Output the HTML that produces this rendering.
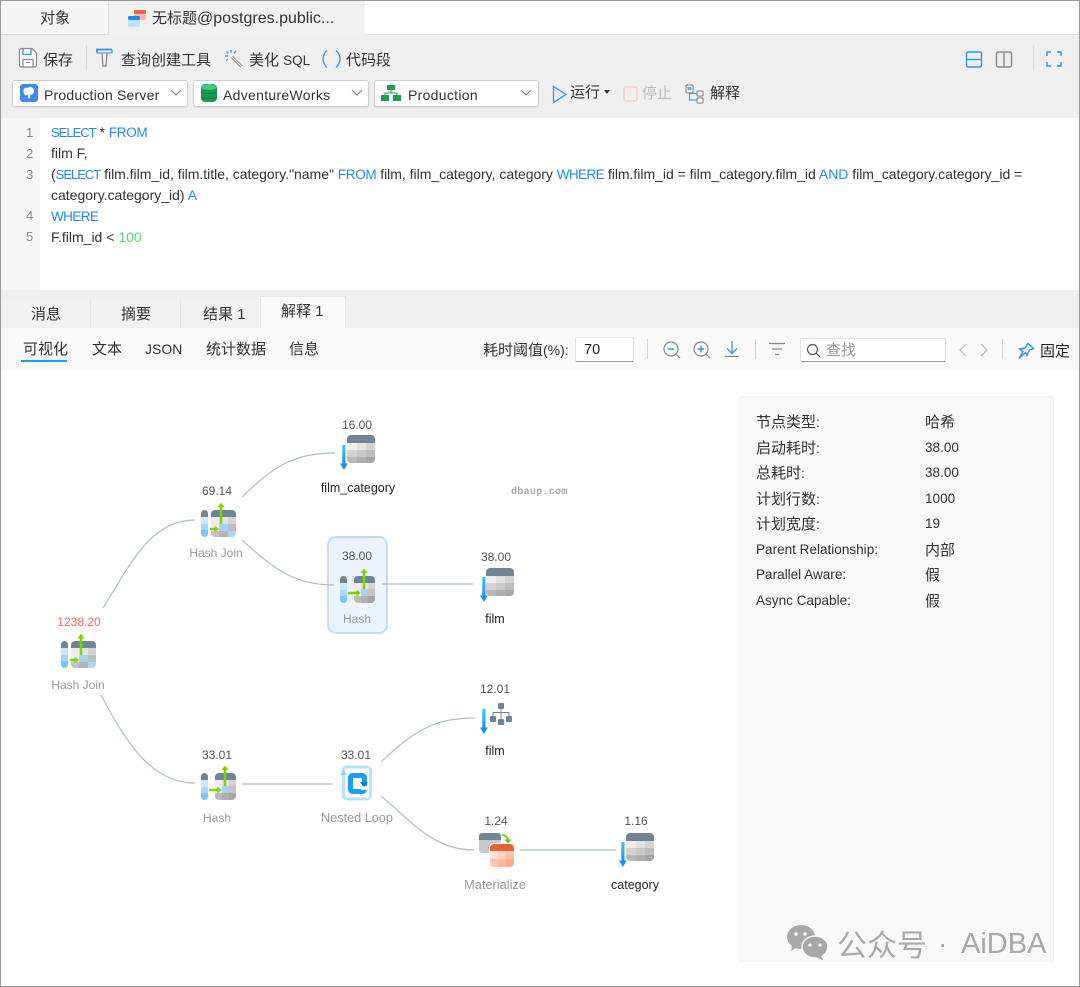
<!DOCTYPE html>
<html><head><meta charset="utf-8">
<style>
html,body{margin:0;padding:0;background:#fff}
#r{position:relative;width:1080px;height:987px;overflow:hidden;background:#fff;font-family:"Liberation Sans","Noto Sans CJK SC",sans-serif;font-size:14px;color:#333}
#r div,#r span.t{position:absolute;white-space:nowrap}
.t{line-height:20px;height:20px;font-size:15px}
.c{transform:translateX(-50%)}
.b{color:#2088f8}
.s{font-size:13px;letter-spacing:-1px}
.f{font-size:13.5px;letter-spacing:-.3px}
.w{font-size:13.5px;letter-spacing:-.6px}
i.a{font-style:normal;font-size:14px}
.g{color:#8a8a8a}
.v{font-size:13.55px}
#r span.q{font-size:14px}
.sel{background:#fff;border:1px solid #cfcfcf;border-radius:3px;height:27px;box-sizing:border-box;box-shadow:0 1px 1px rgba(0,0,0,.08)}
svg{position:absolute;overflow:visible}
#r span.n{font-size:12px;color:#555}
#r span.l{font-size:12px;color:#999}
#r span.k{font-size:12.5px;color:#222}
</style></head><body>
<div id="r">
<svg width="0" height="0" style="left:0;top:0">
<defs>
<clipPath id="cg"><rect x="0" y="0" width="28" height="28" rx="4"/></clipPath>
<clipPath id="cj"><rect x="11" y="8" width="25" height="27" rx="4"/></clipPath>
<clipPath id="cp"><rect x="1" y="8" width="7" height="27" rx="3.5"/></clipPath>
<clipPath id="ch"><rect x="15" y="8" width="21" height="27" rx="4"/></clipPath>
<clipPath id="cm"><rect x="11" y="12" width="24" height="23" rx="4"/></clipPath>
<symbol id="tbl" viewBox="0 0 28 28" width="28" height="28" overflow="visible">
<g clip-path="url(#cg)"><rect width="28" height="8" fill="#6f8494"/>
<rect y="8" width="10" height="7" fill="#efefef"/><rect x="10" y="8" width="9" height="7" fill="#e2e2e2"/><rect x="19" y="8" width="9" height="7" fill="#d3d3d3"/>
<rect y="15" width="10" height="7" fill="#d3d3d3"/><rect x="10" y="15" width="9" height="7" fill="#c8c8c8"/><rect x="19" y="15" width="9" height="7" fill="#bdbdbd"/>
<rect y="22" width="10" height="6" fill="#b8b8b8"/><rect x="10" y="22" width="9" height="6" fill="#afafaf"/><rect x="19" y="22" width="9" height="6" fill="#a6a6a6"/></g>
</symbol>
<symbol id="dn" viewBox="0 0 8 26" width="8" height="26" overflow="visible">
<defs><linearGradient id="dg" x1="0" y1="0" x2="0" y2="1"><stop offset="0" stop-color="#3fc4fb"/><stop offset="1" stop-color="#1a8ef0"/></linearGradient></defs>
<rect x="2.3" y="0" width="3.2" height="20" fill="url(#dg)"/><path d="M0 18.5H7.8L3.9 25Z" fill="#1a8ef0"/>
</symbol>
<symbol id="hj" viewBox="0 0 38 36" width="38" height="36" overflow="visible">
<g clip-path="url(#cp)"><rect x="1" y="8" width="7" height="7" fill="#6f8494"/><rect x="1" y="15" width="7" height="7" fill="#cde6fb"/><rect x="1" y="22" width="7" height="6" fill="#a9d7fa"/><rect x="1" y="28" width="7" height="7" fill="#7fc3f8"/></g>
<g clip-path="url(#cj)"><rect x="11" y="8" width="25" height="7" fill="#6f8494"/>
<rect x="11" y="15" width="8" height="7" fill="#ececec"/><rect x="19" y="15" width="9" height="7" fill="#e4e4e4"/><rect x="28" y="15" width="8" height="7" fill="#cfd6db"/>
<rect x="11" y="22" width="8" height="7" fill="#eaf2f8"/><rect x="19" y="22" width="9" height="7" fill="#a5d3f8"/><rect x="28" y="22" width="8" height="7" fill="#bcbcbc"/>
<rect x="11" y="29" width="8" height="6" fill="#c3c3c3"/><rect x="19" y="29" width="9" height="6" fill="#b4b4b4"/><rect x="28" y="29" width="8" height="6" fill="#a9d7fa"/></g>
<path d="M21 22V3" stroke="#7fd400" stroke-width="2.6" fill="none"/><path d="M17.3 5.4L21 .8l3.7 4.6Z" fill="#7fd400"/>
<path d="M10 27h5.5" stroke="#7fd400" stroke-width="2.6" fill="none"/><path d="M14.6 23.6l4.4 3.4-4.4 3.4Z" fill="#7fd400"/>
</symbol>
<symbol id="hs" viewBox="0 0 38 36" width="38" height="36" overflow="visible">
<g clip-path="url(#cp)"><rect x="1" y="8" width="7" height="7" fill="#6f8494"/><rect x="1" y="15" width="7" height="7" fill="#cde6fb"/><rect x="1" y="22" width="7" height="6" fill="#a9d7fa"/><rect x="1" y="28" width="7" height="7" fill="#7fc3f8"/></g>
<g clip-path="url(#ch)"><rect x="15" y="8" width="21" height="7" fill="#6f8494"/>
<rect x="15" y="15" width="7" height="6" fill="#ececec"/><rect x="22" y="15" width="7" height="6" fill="#e2e2e2"/><rect x="29" y="15" width="7" height="6" fill="#d3d3d3"/>
<rect x="15" y="21" width="7" height="7" fill="#e8eef3"/><rect x="22" y="21" width="7" height="7" fill="#a5d3f8"/><rect x="29" y="21" width="7" height="7" fill="#c4c4c4"/>
<rect x="15" y="28" width="7" height="7" fill="#bcbcbc"/><rect x="22" y="28" width="7" height="7" fill="#b0b0b0"/><rect x="29" y="28" width="7" height="7" fill="#a6a6a6"/></g>
<path d="M25 21V3" stroke="#7fd400" stroke-width="2.6" fill="none"/><path d="M21.3 4.8L25 .6l3.7 4.2Z" fill="#7fd400"/>
<path d="M9 25h9" stroke="#7fd400" stroke-width="2.6" fill="none"/><path d="M17.4 21.6l4.4 3.4-4.4 3.4Z" fill="#7fd400"/>
</symbol>
</defs>
</svg>

<!-- top tabs -->
<div style="left:1px;top:1px;width:107px;height:33px;background:#f5f5f5;border-right:1px solid #ddd;border-bottom:1px solid #ddd"></div>
<div style="left:109px;top:1px;width:256px;height:34px;background:#f1f1f1"></div>
<div style="left:365px;top:34px;width:715px;height:1px;background:#e0e0e0"></div>
<span class="t" style="left:40px;top:9px;color:#333">对象</span>
<svg style="left:127px;top:8px" width="22" height="22"><rect x="7" y="2" width="12" height="10" rx="2" fill="#f6b8a4"/><rect x="7" y="2" width="12" height="4" rx="1.5" fill="#e86a45"/><rect x="1" y="8" width="12" height="11" rx="2" fill="#bde0fb"/><rect x="1" y="8" width="12" height="4" rx="1.5" fill="#1e88e5"/></svg>
<span class="t" style="left:152px;top:9px;color:#333">无标题<i class="a" style="font-size:16px">@postgres.public...</i></span>

<!-- toolbar -->
<div style="left:1px;top:35px;width:1078px;height:83px;background:#efefef"></div>
<svg style="left:18px;top:47px" width="20" height="22" fill="none"><path d="M1.5 3.5a2 2 0 0 1 2-2H14l4.500 4.500v12a2 2 0 0 1-2 2H3.500a2 2 0 0 1-2-2Z" stroke="#8a8a8a" stroke-width="1.2" fill="#fff"/><path d="M5 2v5.500h8V2" stroke="#2f95ee" stroke-width="1.3"/><path d="M5 19.500v-7h10v7" stroke="#8a8a8a" stroke-width="1.2"/><path d="M8 15.500h4" stroke="#8a8a8a"/></svg>
<span class="t" style="left:43px;top:51px">保存</span>
<div style="left:86px;top:45px;width:1px;height:26px;background:#d8d8d8"></div>
<svg style="left:96px;top:48px" width="18" height="20" fill="none"><path d="M1 5V1.500h15" stroke="#2f95ee" stroke-width="1.800"/><path d="M16 1.500V5H1" stroke="#2f95ee" stroke-width="1"/><path d="M6 5l1 13h3l1-13" stroke="#888" stroke-width="1.200"/></svg>
<span class="t" style="left:121px;top:51px">查询创建工具</span>
<svg style="left:224px;top:49px" width="20" height="20" fill="none"><path d="M8 8l9.500 9.500" stroke="#8a8a8a" stroke-width="3"/><path d="M8 8l9.500 9.500" stroke="#fff" stroke-width="1"/><path d="M7 1v3M1 7h3M2.500 2.500l2 2M12 2l-2 2.500M2 12l2-2" stroke="#2f95ee" stroke-width="1.200"/></svg>
<span class="t" style="left:249px;top:51px">美化 <i class="a" style="font-size:13.500px">SQL</i></span>
<svg style="left:322px;top:49px" width="19" height="20" fill="none" stroke="#2f95ee" stroke-width="1.300"><path d="M5 1.500C-.2 6 -.2 14 5 18.500"/><path d="M14 1.500C19.200 6 19.200 14 14 18.500"/></svg>
<span class="t" style="left:346px;top:51px">代码段</span>

<svg style="left:965px;top:50px" width="18" height="18" fill="none" stroke="#2f95ee" stroke-width="1.400"><rect x="1.500" y="2" width="15" height="15" rx="1.500"/><path d="M1.500 9.500h15"/></svg>
<svg style="left:995px;top:50px" width="18" height="18" fill="none" stroke="#8a8a8a" stroke-width="1.400"><rect x="1.500" y="2" width="15" height="15" rx="1.500"/><path d="M9 2v15"/></svg>
<div style="left:1033px;top:45px;width:1px;height:26px;background:#dcdcdc"></div>
<svg style="left:1045px;top:50px" width="18" height="18" fill="none" stroke="#2f95ee" stroke-width="1.400"><path d="M2 6V2h4M12 2h4v4M16 12v4h-4M6 16H2v-4"/></svg>

<div class="sel" style="left:12px;top:80px;width:176px"></div>
<svg style="left:20px;top:84px" width="18" height="18"><rect width="18" height="18" rx="3" fill="#3d8bf0"/><path d="M5 4c-2 1-2 5 0 7 1 1 2 0 2-1l1 1v3c1 1 2 0 2-1v-2c2 0 4-1 4-4s-2-4-4-4c-1 0-2 .5-2.500 1C7 3.500 6 3.500 5 4Z" fill="#fff"/></svg>
<span class="t q" style="left:44px;top:85px;color:#333;letter-spacing:.2px">Production Server</span>
<svg style="left:170px;top:89px" width="12" height="8" fill="none" stroke="#777" stroke-width="1.100"><path d="M1 1l5 5 5-5"/></svg>

<div class="sel" style="left:193px;top:80px;width:176px"></div>
<svg style="left:200px;top:83px" width="18" height="20"><rect x="1" y="1" width="16" height="18" rx="4" fill="#1c9a52"/><ellipse cx="9" cy="4" rx="8" ry="3" fill="#3ecb7b"/><path d="M1 9c2 2 14 2 16 0M1 14c2 2 14 2 16 0" stroke="#0f7a3e" fill="none"/></svg>
<span class="t q" style="left:223px;top:85px;color:#333;letter-spacing:.3px">AdventureWorks</span>
<svg style="left:351px;top:89px" width="12" height="8" fill="none" stroke="#777" stroke-width="1.100"><path d="M1 1l5 5 5-5"/></svg>

<div class="sel" style="left:374px;top:80px;width:165px"></div>
<svg style="left:381px;top:84px" width="20" height="18"><rect x="6" y="1" width="8" height="5" fill="#1f9d55"/><rect x="0" y="11" width="8" height="6" fill="#1f9d55"/><rect x="12" y="11" width="8" height="6" fill="#1f9d55"/><path d="M10 6v3M4 11V9h12v2" stroke="#1f9d55" fill="none"/></svg>
<span class="t q" style="left:408px;top:85px;color:#333;letter-spacing:.3px">Production</span>
<svg style="left:520px;top:89px" width="12" height="8" fill="none" stroke="#777" stroke-width="1.100"><path d="M1 1l5 5 5-5"/></svg>

<svg style="left:552px;top:85px" width="16" height="19" fill="none" stroke="#2f95ee" stroke-width="1.300"><path d="M1.500 1.500L14 9.500 1.500 17.500Z"/></svg>
<span class="t" style="left:570px;top:83px">运行</span>
<svg style="left:604px;top:90px" width="7" height="5"><path d="M0 0h6L3 4Z" fill="#333"/></svg>
<svg style="left:623px;top:86px" width="16" height="16" fill="none"><rect x="1" y="1" width="13" height="14" rx="2" stroke="#fbc4bc" stroke-width="1.300"/></svg>
<span class="t" style="left:642px;top:84px;color:#bbb">停止</span>
<svg style="left:685px;top:84px" width="20" height="20" fill="none"><rect x="1" y="1" width="7" height="8" rx="1" stroke="#777" fill="#fff"/><rect x="2.500" y="3" width="4" height="3" fill="#5aa9ef"/><rect x="12" y="7" width="6" height="5" rx="1" stroke="#777" fill="#fff"/><rect x="12" y="14" width="6" height="5" rx="1" stroke="#777" fill="#fff"/><path d="M4.500 9v7H12M4.500 9.500H12" stroke="#2f95ee"/></svg>
<span class="t" style="left:710px;top:84px">解释</span>

<!-- editor -->
<div style="left:1px;top:118px;width:39px;height:172px;background:#f7f7f7"></div>
<span class="t g" style="left:26px;top:123px;font-size:13px">1</span>
<span class="t g" style="left:26px;top:144px;font-size:13px">2</span>
<span class="t g" style="left:26px;top:165px;font-size:13px">3</span>
<span class="t g" style="left:26px;top:206px;font-size:13px">4</span>
<span class="t g" style="left:26px;top:227px;font-size:13px">5</span>
<span class="t q" style="left:51px;top:122px"><span class="b s">SELECT</span> * <span class="b f">FROM</span></span>
<span class="t q" style="left:51px;top:143px">film F,</span>
<span class="t q" style="left:51px;top:164px;letter-spacing:-.02px">(<span class="b s">SELECT</span> film.film_id, film.title, category."name" <span class="b f">FROM</span> film, film_category, category <span class="b w">WHERE</span> film.film_id = film_category.film_id <span class="b">AND</span> film_category.category_id =</span>
<span class="t q" style="left:51px;top:185px">category.category_id) <span class="b">A</span></span>
<span class="t q" style="left:51px;top:206px"><span class="b w">WHERE</span></span>
<span class="t q" style="left:51px;top:227px">F.film_id &lt; <span style="color:#5ad877">100</span></span>

<!-- result tabs -->
<div style="left:1px;top:290px;width:1078px;height:38px;background:#efefef"></div>
<div style="left:1px;top:300px;width:89px;height:28px;background:#f1f1f1;border-right:1px solid #e4e4e4"></div>
<div style="left:91px;top:300px;width:89px;height:28px;background:#f1f1f1;border-right:1px solid #e4e4e4"></div>
<div style="left:181px;top:300px;width:79px;height:28px;background:#f1f1f1"></div>
<div style="left:260px;top:296px;width:86px;height:32px;background:#f9f9f9;border:1px solid #e6e6e6;border-bottom:0;box-sizing:border-box"></div>
<span class="t" style="left:31px;top:305px">消息</span>
<span class="t" style="left:121px;top:305px">摘要</span>
<span class="t" style="left:203px;top:305px">结果 1</span>
<span class="t" style="left:281px;top:302px">解释 1</span>

<div style="left:1px;top:328px;width:1078px;height:42px;background:#f9f9f9"></div>
<span class="t" style="left:23px;top:340px">可视化</span>
<div style="left:21px;top:360px;width:46px;height:2px;background:#0ea5e9"></div>
<span class="t" style="left:92px;top:340px">文本</span>
<span class="t q" style="left:145px;top:339px">JSON</span>
<span class="t" style="left:206px;top:340px">统计数据</span>
<span class="t" style="left:289px;top:340px">信息</span>

<span class="t" style="left:483px;top:340px">耗时阈值<i class="a">(%):</i></span>
<div style="left:575px;top:337px;width:59px;height:25px;background:#fff;border:1px solid #e2e2e2;border-bottom:1px solid #999;box-sizing:border-box;border-radius:2px"></div>
<span class="t" style="left:584px;top:340px;color:#222;font-size:14.500px">70</span>
<div style="left:647px;top:339px;width:1px;height:20px;background:#d5d5d5"></div>
<svg style="left:662px;top:340px" width="20" height="20" fill="none"><circle cx="9" cy="9" r="7" stroke="#888" stroke-width="1.200"/><path d="M14 14l4 4" stroke="#888" stroke-width="1.200"/><path d="M5.500 9h7" stroke="#2f95ee" stroke-width="1.400"/></svg>
<svg style="left:692px;top:340px" width="20" height="20" fill="none"><circle cx="9" cy="9" r="7" stroke="#888" stroke-width="1.200"/><path d="M14 14l4 4" stroke="#888" stroke-width="1.200"/><path d="M5.500 9h7M9 5.500v7" stroke="#2f95ee" stroke-width="1.400"/></svg>
<svg style="left:723px;top:340px" width="18" height="18" fill="none"><path d="M9 1v12M4 8.500l5 5 5-5" stroke="#2f95ee" stroke-width="1.300"/><path d="M1.500 16.500h14" stroke="#888" stroke-width="1.200"/></svg>
<div style="left:755px;top:339px;width:1px;height:20px;background:#d5d5d5"></div>
<svg style="left:768px;top:342px" width="18" height="14" fill="none" stroke="#888" stroke-width="1.200"><path d="M1 1.500h16M4 7h10M7 12.500h4"/></svg>
<div style="left:800px;top:338px;width:146px;height:24px;background:#fff;border:1px solid #e2e2e2;border-bottom:1px solid #999;box-sizing:border-box;border-radius:2px"></div>
<svg style="left:806px;top:343px" width="15" height="15" fill="none" stroke="#555" stroke-width="1.200"><circle cx="6.500" cy="6.500" r="5"/><path d="M10 10l4 4"/></svg>
<span class="t" style="left:826px;top:341px;color:#999">查找</span>
<svg style="left:958px;top:343px" width="10" height="14" fill="none" stroke="#bbb" stroke-width="1.200"><path d="M8 1L2 7l6 6"/></svg>
<svg style="left:979px;top:343px" width="10" height="14" fill="none" stroke="#bbb" stroke-width="1.200"><path d="M2 1l6 6-6 6"/></svg>
<div style="left:1002px;top:339px;width:1px;height:20px;background:#d5d5d5"></div>
<svg style="left:1017px;top:342px" width="18" height="18" fill="none" stroke="#2f95ee" stroke-width="1.400"><path d="M11 1.500l5.500 5-4 1.500-2.500 5.500-1.500-3-6.500 6 4-7L2.500 7 8 6Z"/></svg>
<span class="t" style="left:1040px;top:342px;color:#222">固定</span>

<!-- selected node -->
<div style="left:327px;top:536px;width:61px;height:98px;box-sizing:border-box;background:#ebf3fe;border:2px solid #c0dcfb;border-radius:9px"></div>

<!-- graph lines -->
<svg style="left:0;top:0" width="1080" height="987" fill="none" stroke="#a9bdca" stroke-width="1.200">
<path d="M103 608C130 565 150 520 195 520"/>
<path d="M101 695C125 740 150 783 195 783"/>
<path d="M242 497C275 465 295 453 335 453"/>
<path d="M242 540C275 570 295 585 334 585"/>
<path d="M382 584H473"/>
<path d="M242 784H333"/>
<path d="M381 762C415 730 435 718 475 718"/>
<path d="M381 796C415 825 435 850 474 850"/>
<path d="M520 850H616"/>
</svg>

<!-- nodes -->
<span class="t n c" style="left:357px;top:415px">16.00</span>
<svg style="left:347px;top:435px" width="28" height="28"><use href="#tbl"/></svg>
<svg style="left:340px;top:445px" width="8" height="26"><use href="#dn"/></svg>
<span class="t k c" style="left:358px;top:478px">film_category</span>

<span class="t n c" style="left:217px;top:481px">69.14</span>
<svg style="left:200px;top:502px" width="38" height="36"><use href="#hj"/></svg>
<span class="t l c" style="left:216px;top:543px">Hash Join</span>

<span class="t n c" style="left:357px;top:546px">38.00</span>
<svg style="left:339px;top:568px" width="38" height="36"><use href="#hs"/></svg>
<span class="t l c" style="left:357px;top:609px">Hash</span>

<span class="t n c" style="left:496px;top:547px">38.00</span>
<svg style="left:486px;top:568px" width="28" height="28"><use href="#tbl"/></svg>
<svg style="left:480px;top:577px" width="8" height="26"><use href="#dn"/></svg>
<span class="t k c" style="left:495px;top:609px">film</span>

<span class="t n c" style="left:79px;top:612px;color:#f8665a">1238.20</span>
<svg style="left:60px;top:633px" width="38" height="36"><use href="#hj"/></svg>
<span class="t l c" style="left:78px;top:675px">Hash Join</span>

<span class="t n c" style="left:495px;top:679px">12.01</span>
<svg style="left:480px;top:709px" width="8" height="26"><use href="#dn"/></svg>
<svg style="left:490px;top:703px" width="24" height="24" fill="#6f8494"><rect x="8" y="0" width="6" height="6" rx="1"/><rect x="0" y="13" width="6" height="6" rx="1"/><rect x="8" y="16" width="6" height="6" rx="1"/><rect x="16" y="13" width="6" height="6" rx="1"/><path d="M11 5v11M3 13V9.500h16V13" stroke="#6f8494" fill="none"/></svg>
<span class="t k c" style="left:495px;top:741px">film</span>

<span class="t n c" style="left:217px;top:745px">33.01</span>
<svg style="left:200px;top:765px" width="38" height="36"><use href="#hs"/></svg>
<span class="t l c" style="left:217px;top:808px">Hash</span>

<span class="t n c" style="left:356px;top:745px">33.01</span>
<svg style="left:340px;top:765px" width="34" height="37" fill="none">
<path d="M3.500 12V5a3 3 0 0 1 3-3h21a3 3 0 0 1 3 3v26a3 3 0 0 1-3 3h-21a3 3 0 0 1-3-3V12" stroke="#b7e3fb" stroke-width="3"/>
<path d="M0 10l3.500-5L7 10Z" fill="#8ed0f8"/>
<rect x="10.500" y="10.500" width="14" height="16" rx="2" stroke="#1e9df0" stroke-width="5" fill="#fff"/>
<rect x="21" y="21" width="7" height="4" fill="#fff"/><path d="M20 17h8l-4 5Z" fill="#1479d8"/>
</svg>
<span class="t l c" style="left:357px;top:808px;font-size:12.700px">Nested Loop</span>

<span class="t n c" style="left:496px;top:811px">1.24</span>
<svg style="left:479px;top:832px" width="36" height="38">
<rect x="0" y="1" width="22" height="20" rx="3" fill="#c9c9c9"/><rect y="1" width="22" height="7" rx="3" fill="#6f8494"/><rect y="5" width="22" height="3" fill="#6f8494"/>
<rect x="10" y="11" width="26" height="25" rx="5" fill="#fff"/>
<g clip-path="url(#cm)"><rect x="11" y="12" width="24" height="7" fill="#e9603d"/>
<rect x="11" y="19" width="8" height="8" fill="#fde3d8"/><rect x="19" y="19" width="8" height="8" fill="#fcd2c1"/><rect x="27" y="19" width="8" height="8" fill="#fdc0aa"/>
<rect x="11" y="27" width="8" height="8" fill="#fdc8b3"/><rect x="19" y="27" width="8" height="8" fill="#fcb9a0"/><rect x="27" y="27" width="8" height="8" fill="#fca98c"/></g>
<path d="M23 3c3 0 5 1 6 5" stroke="#68c800" stroke-width="1.800" fill="none"/><path d="M25.500 7.500h7l-3.500 4Z" fill="#68c800"/>
</svg>
<span class="t l c" style="left:495px;top:875px;font-size:12.800px">Materialize</span>

<span class="t n c" style="left:636px;top:811px">1.16</span>
<svg style="left:626px;top:833px" width="28" height="28"><use href="#tbl"/></svg>
<svg style="left:619px;top:842px" width="8" height="26"><use href="#dn"/></svg>
<span class="t k c" style="left:635px;top:875px">category</span>

<span class="t" style="left:511px;top:483px;font-family:'Liberation Mono',monospace;font-size:10px;font-weight:bold;color:#a8a8a8;letter-spacing:.3px">dbaup.com</span>

<!-- details panel -->
<div style="left:739px;top:396px;width:315px;height:566px;background:#f8f8f8;border:1px solid #f0f0f0;box-sizing:border-box"></div>
<span class="t" style="left:756px;top:412px">节点类型<i class="a v">:</i></span><span class="t" style="left:925px;top:413px">哈希</span>
<span class="t" style="left:756px;top:438px">启动耗时<i class="a v">:</i></span><span class="t v" style="left:925px;top:438px">38.00</span>
<span class="t" style="left:756px;top:463px">总耗时<i class="a v">:</i></span><span class="t v" style="left:925px;top:463px">38.00</span>
<span class="t" style="left:756px;top:489px">计划行数<i class="a v">:</i></span><span class="t v" style="left:925px;top:489px">1000</span>
<span class="t" style="left:756px;top:514px">计划宽度<i class="a v">:</i></span><span class="t v" style="left:925px;top:514px">19</span>
<span class="t v" style="left:756px;top:540px">Parent Relationship:</span><span class="t" style="left:925px;top:541px">内部</span>
<span class="t v" style="left:756px;top:565px">Parallel Aware:</span><span class="t" style="left:925px;top:566px">假</span>
<span class="t v" style="left:756px;top:591px">Async Capable:</span><span class="t" style="left:925px;top:592px">假</span>

<!-- watermark -->
<svg style="left:786px;top:924px" width="44" height="36" fill="#a8a8a8">
<ellipse cx="15" cy="13" rx="14" ry="12"/><path d="M6 21l-1 6 7-4Z"/>
<ellipse cx="29" cy="23" rx="13" ry="11" stroke="#f8f8f8" stroke-width="1.500"/><path d="M35 31l2 5-7-3Z"/>
<circle cx="10" cy="10" r="1.800" fill="#f8f8f8"/><circle cx="19" cy="10" r="1.800" fill="#f8f8f8"/><circle cx="24" cy="21" r="1.600" fill="#f8f8f8"/><circle cx="34" cy="21" r="1.600" fill="#f8f8f8"/>
</svg>
<span class="t" style="left:837px;top:928px;height:30px;line-height:30px;font-size:30px;color:#a8a8a8;font-family:'Noto Sans CJK SC',sans-serif">公众号</span>
<span class="t" style="left:938px;top:929px;height:30px;line-height:30px;font-size:28px;color:#a8a8a8">·</span>
<span class="t" style="left:961px;top:929px;height:30px;line-height:30px;font-size:29px;color:#a8a8a8">AiDBA</span>

<!-- frame -->
<div style="left:0;top:0;width:1080px;height:987px;box-sizing:border-box;border:1px solid #9a9a9a;pointer-events:none"></div>
</div>
</body></html>
